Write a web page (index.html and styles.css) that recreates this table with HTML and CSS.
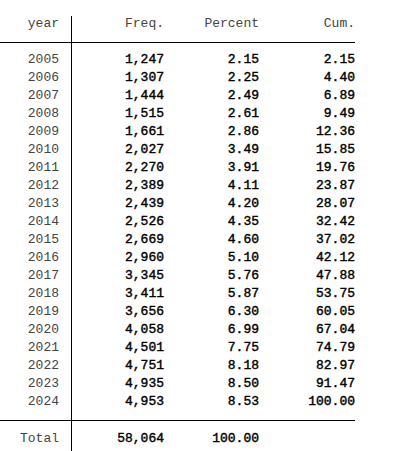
FILE: index.html
```html
<!DOCTYPE html>
<html>
<head>
    <meta charset="utf-8"/>
    <title>tabulate year</title>
    <link rel="stylesheet" href="styles.css">
</head>
<body>
<table class="tab">
    <thead>
        <tr>
            <th class="lab">year</th>
            <th>Freq.</th>
            <th>Percent</th>
            <th>Cum.</th>
        </tr>
    </thead>
    <tbody class="rows">
        <tr><td class="lab">2005</td><td>1,247</td><td>2.15</td><td>2.15</td></tr>
        <tr><td class="lab">2006</td><td>1,307</td><td>2.25</td><td>4.40</td></tr>
        <tr><td class="lab">2007</td><td>1,444</td><td>2.49</td><td>6.89</td></tr>
        <tr><td class="lab">2008</td><td>1,515</td><td>2.61</td><td>9.49</td></tr>
        <tr><td class="lab">2009</td><td>1,661</td><td>2.86</td><td>12.36</td></tr>
        <tr><td class="lab">2010</td><td>2,027</td><td>3.49</td><td>15.85</td></tr>
        <tr><td class="lab">2011</td><td>2,270</td><td>3.91</td><td>19.76</td></tr>
        <tr><td class="lab">2012</td><td>2,389</td><td>4.11</td><td>23.87</td></tr>
        <tr><td class="lab">2013</td><td>2,439</td><td>4.20</td><td>28.07</td></tr>
        <tr><td class="lab">2014</td><td>2,526</td><td>4.35</td><td>32.42</td></tr>
        <tr><td class="lab">2015</td><td>2,669</td><td>4.60</td><td>37.02</td></tr>
        <tr><td class="lab">2016</td><td>2,960</td><td>5.10</td><td>42.12</td></tr>
        <tr><td class="lab">2017</td><td>3,345</td><td>5.76</td><td>47.88</td></tr>
        <tr><td class="lab">2018</td><td>3,411</td><td>5.87</td><td>53.75</td></tr>
        <tr><td class="lab">2019</td><td>3,656</td><td>6.30</td><td>60.05</td></tr>
        <tr><td class="lab">2020</td><td>4,058</td><td>6.99</td><td>67.04</td></tr>
        <tr><td class="lab">2021</td><td>4,501</td><td>7.75</td><td>74.79</td></tr>
        <tr><td class="lab">2022</td><td>4,751</td><td>8.18</td><td>82.97</td></tr>
        <tr><td class="lab">2023</td><td>4,935</td><td>8.50</td><td>91.47</td></tr>
        <tr><td class="lab">2024</td><td>4,953</td><td>8.53</td><td>100.00</td></tr>
    </tbody>
    <tfoot class="total">
        <tr><td class="lab">Total</td><td>58,064</td><td>100.00</td><td></td></tr>
    </tfoot>
</table>
</body>
</html>
```

FILE: styles.css
```css
* {
    margin: 0;
    padding: 0;
}
body {
    background: #fff;
    padding-top: 16px;
    overflow: hidden;
}
.tab {
    border-collapse: separate;
    border-spacing: 0;
    font: 13px/18px "Liberation Mono", "Courier New", monospace;
    color: #000;
}
.tab th, .tab td {
    padding: 0;
    text-align: right;
    white-space: nowrap;
}
.tab th {
    font-weight: normal;
    color: #444;
    line-height: 16px;
    padding-bottom: 10px;
    border-bottom: 1px solid #000;
}
/* results a bit heavier than labels */
.tab td {
    font-weight: normal;
    -webkit-text-stroke: 0.4px #000;
}
.tab .lab {
    width: 59px;
    padding-right: 12px;
    border-right: 1px solid #000;
    color: #444;
    -webkit-text-stroke: 0;
}
.tab th:nth-child(2), .tab td:nth-child(2) {
    width: 92px;
}
.tab th:nth-child(3), .tab td:nth-child(3) {
    width: 95px;
}
.tab th:nth-child(4), .tab td:nth-child(4) {
    width: 96px;
}
.rows tr:first-child td {
    padding-top: 8px;
}
.rows tr:last-child td {
    padding-bottom: 9px;
}
.total td {
    border-top: 1px solid #000;
    padding-top: 9px;
    padding-bottom: 20px;
}
```
